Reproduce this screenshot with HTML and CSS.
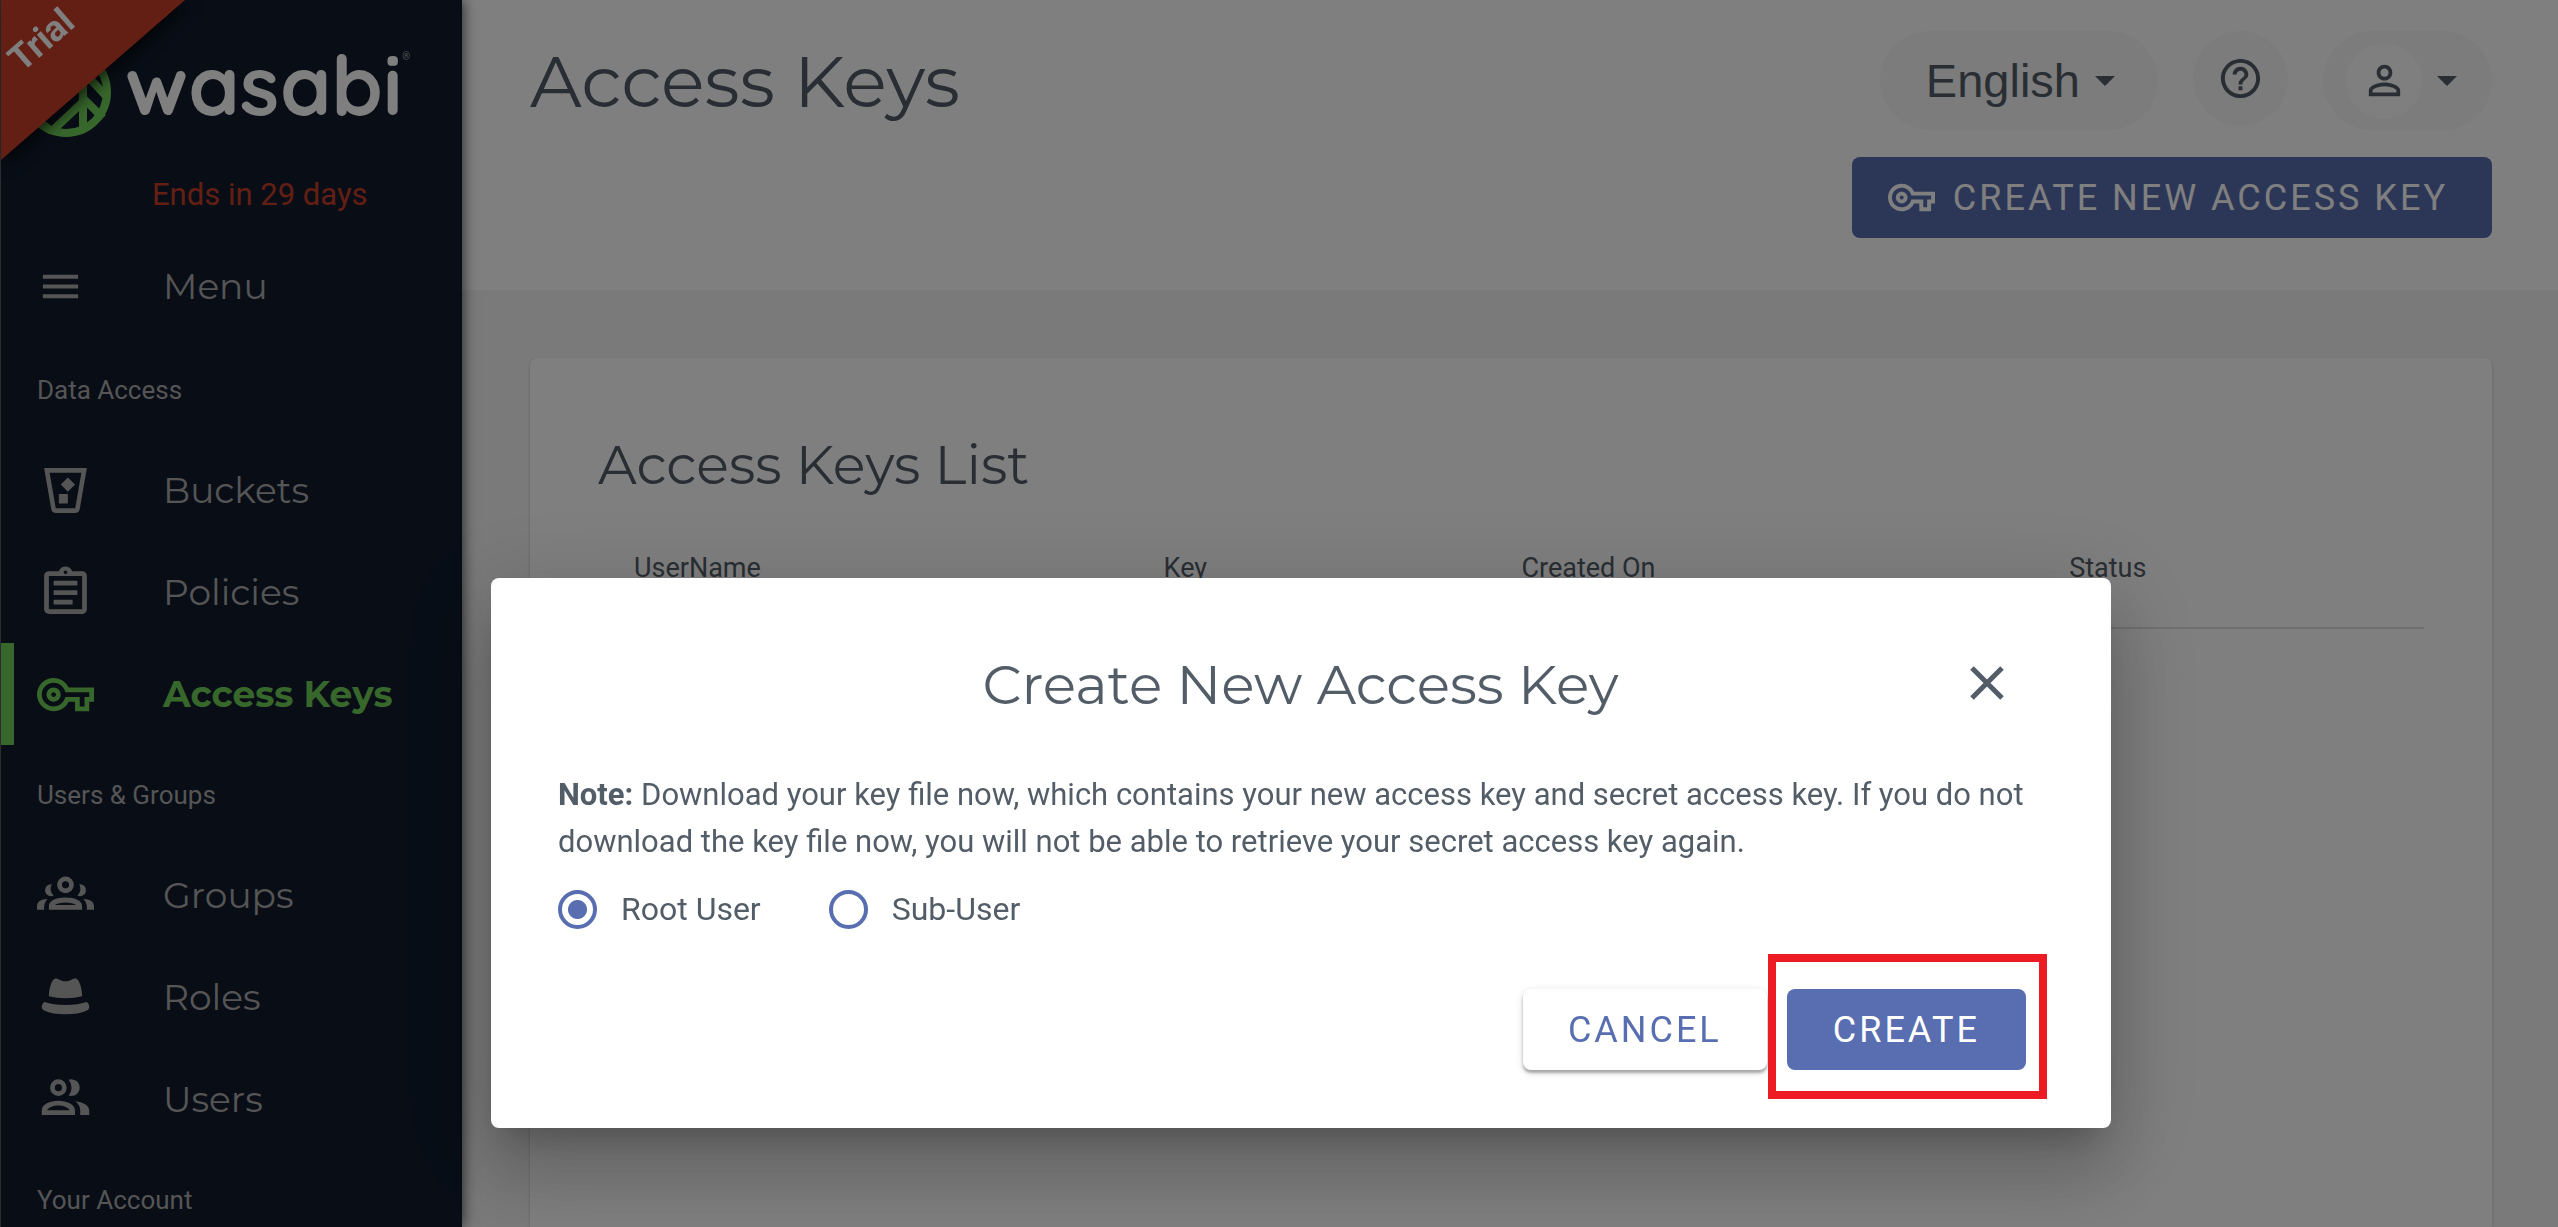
FILE: index.html
```html
<!DOCTYPE html>
<html lang="en">
	<head>
		<meta charset="utf-8" />
		<title>Wasabi - Access Keys</title>
		<meta name="viewport" content="width=device-width, initial-scale=1" />
		<link rel="stylesheet" href="styles.css">
	</head>
	<body>
		<!-- shared icons -->
		<svg class="sprite" aria-hidden="true">
			<symbol id="icon-key" viewBox="0 0 24 24">
				<path d="M22 19h-6v-4h-2.68c-1.14 2.42-3.6 4-6.32 4-3.86 0-7-3.14-7-7s3.14-7 7-7c2.72 0 5.17 1.58 6.32 4H24v6h-2v4zm-4-2h2v-4h2v-2H11.94l-.23-.67C11.01 8.34 9.11 7 7 7c-2.76 0-5 2.24-5 5s2.24 5 5 5c2.11 0 4.01-1.34 4.71-3.33l.23-.67H18v4zM7 15c-1.65 0-3-1.35-3-3s1.35-3 3-3 3 1.35 3 3-1.35 3-3 3zm0-4c-.55 0-1 .45-1 1s.45 1 1 1 1-.45 1-1-.45-1-1-1z"/>
			</symbol>
			<symbol id="icon-caret" viewBox="0 0 20 10">
				<path d="M0 0h20L10 10z"/>
			</symbol>
		</svg>

		<div class="app">
			<aside class="sidebar">
				<div class="brand">
					<svg class="brand-mark" viewBox="0 0 90 90">
						<circle cx="45" cy="45" r="41" fill="none" stroke="#70ce58" stroke-width="8"/>
						<path d="M62 8v74M31 84l34-32M60 49l22 22M60 22l26 28M31 84L14 72" fill="none" stroke="#70ce58" stroke-width="8"/>
					</svg>
					<span class="brand-name">wasabi</span><sup class="brand-reg">®</sup>
				</div>
				<div class="ribbon"><div class="ribbon-fill"><span>Trial</span></div></div>
				<p class="trial-note">Ends in 29 days</p>

				<nav>
					<button class="nav-item nav-menu" type="button">
						<svg class="nav-icon nav-icon-sm" viewBox="0 0 24 24"><path d="M3 18h18v-2H3v2zm0-5h18v-2H3v2zm0-7v2h18V6H3z"/></svg>
						Menu
					</button>

					<h2 class="nav-label">Data Access</h2>
					<a class="nav-item" href="#buckets">
						<svg class="nav-icon" viewBox="0 0 24 24"><path fill-rule="evenodd" d="M3 2.500h18L18 19.800a2 2 0 0 1-2 1.700H8a2 2 0 0 1-2-1.700zM5.300 4.500l2.600 15h8.200l2.600-15zM13 6.500l3 3-3 3-3-3zM9.200 13.500h3.800v4H9.200z"/></svg>
						Buckets
					</a>
					<a class="nav-item" href="#policies">
						<svg class="nav-icon" viewBox="0 0 24 24"><path d="M7 15h8v2H7zm0-4h10v2H7zm0-4h10v2H7z"/><path d="M19 3h-4.180C14.400 1.840 13.300 1 12 1c-1.300 0-2.400.84-2.820 2H5c-.14 0-.27.01-.4.040-.39.080-.74.280-1.010.550-.18.180-.33.400-.43.640-.1.230-.16.490-.16.770v14c0 .27.06.54.16.78s.25.45.43.640c.27.270.62.470 1.010.550.13.020.26.030.4.030h14c1.100 0 2-.9 2-2V5c0-1.100-.9-2-2-2zm-7-.25c.41 0 .75.340.75.750s-.34.750-.75.750-.75-.34-.75-.75.340-.75.750-.75zM19 19H5V5h14v14z"/></svg>
						Policies
					</a>
					<a class="nav-item active" href="#access-keys" aria-current="page">
						<svg class="nav-icon"><use href="#icon-key"/></svg>
						Access Keys
					</a>

					<h2 class="nav-label">Users &amp; Groups</h2>
					<a class="nav-item" href="#groups">
						<svg class="nav-icon" viewBox="0 0 24 24"><path d="M7 12a2.500 2.500 0 1 1-.8-4.700 4 4 0 0 0 .8 4.700zM17 12a2.500 2.500 0 1 0 .8-4.700 4 4 0 0 1-.8 4.700zM0 18v-1.500c0-1.700 1.600-3 4.500-3A5 5 0 0 0 3 17v1zm24 0v-1.500c0-1.700-1.600-3-4.500-3A5 5 0 0 1 21 17v1z"/><path fill-rule="evenodd" d="M12 4a3.500 3.500 0 1 1 0 7 3.500 3.500 0 0 1 0-7zm0 2a1.500 1.500 0 1 0 0 3 1.500 1.500 0 0 0 0-3zM5 18v-1.500C5 14.200 8 12.800 12 12.800s7 1.400 7 3.700V18zm2.500-2h9c-.9-.7-2.500-1.100-4.500-1.100s-3.600.4-4.500 1.100z"/></svg>
						Groups
					</a>
					<a class="nav-item" href="#roles">
						<svg class="nav-icon" viewBox="0 0 24 24"><path d="M5 11.500C5 8.500 6.200 4 7.800 4c1.400 0 2.400 1.200 4.200 1.200S14.800 4 16.200 4C17.800 4 19 8.500 19 11.500c-2 .5-4.500.8-7 .8s-5-.3-7-.8zM3.200 13.900c2.300.8 5.300 1.300 8.800 1.300s6.500-.5 8.800-1.300c.7.400 1.200 1.100 1.200 2 0 .7-.4 1.300-1 1.600-2.400 1.100-5.500 1.600-9 1.600s-6.600-.5-9-1.600c-.6-.3-1-.9-1-1.600 0-.9.5-1.600 1.200-2z"/></svg>
						Roles
					</a>
					<a class="nav-item" href="#users">
						<svg class="nav-icon" viewBox="0 0 24 24"><path d="M16.200 12.700c3 .4 5.800 1.700 5.800 3.900v1.900h-3.800v-1.900c0-1.600-.8-2.900-2-3.900zM13.300 3.700a3.500 3.500 0 1 1 0 6.600 5 5 0 0 0 0-6.600z"/><path fill-rule="evenodd" d="M9 3.500a3.500 3.500 0 1 1 0 7 3.500 3.500 0 0 1 0-7zm0 2a1.500 1.500 0 1 0 0 3 1.500 1.500 0 0 0 0-3zM2 18.500V16.500c0-2.500 3.500-4 7-4s7 1.500 7 4v2zm2.200-2h9.600c-.6-1.100-2.600-2-4.800-2s-4.200.9-4.800 2z"/></svg>
						Users
					</a>

					<h2 class="nav-label">Your Account</h2>
				</nav>
			</aside>

			<main class="main">
				<header class="page-header">
					<h1>Access Keys</h1>
					<div class="header-side">
						<div class="toolbar">
							<button class="pill" type="button">English <svg class="caret"><use href="#icon-caret"/></svg></button>
							<button class="pill pill-round" type="button" aria-label="Help">
								<svg class="help-icon" viewBox="0 0 24 24"><path d="M11 18h2v-2h-2v2zm1-16C6.480 2 2 6.480 2 12s4.480 10 10 10 10-4.480 10-10S17.520 2 12 2zm0 18c-4.410 0-8-3.590-8-8s3.590-8 8-8 8 3.590 8 8-3.590 8-8 8zm0-14c-2.210 0-4 1.790-4 4h2c0-1.100.9-2 2-2s2 .9 2 2c0 2-3 1.750-3 5h2c0-2.250 3-2.500 3-5 0-2.210-1.790-4-4-4z"/></svg>
							</button>
							<button class="pill pill-user" type="button" aria-label="Account">
								<span class="avatar"><svg class="help-icon" viewBox="0 0 24 24"><path d="M12 5.900c1.160 0 2.100.94 2.100 2.100s-.94 2.100-2.100 2.100S9.900 9.160 9.900 8s.94-2.100 2.100-2.100m0 9c2.970 0 6.100 1.460 6.100 2.100v1.100H5.900V17c0-.64 3.130-2.100 6.100-2.100M12 4C9.790 4 8 5.790 8 8s1.790 4 4 4 4-1.790 4-4-1.790-4-4-4zm0 9c-2.670 0-8 1.340-8 4v3h16v-3c0-2.660-5.330-4-8-4z"/></svg></span>
								<svg class="caret"><use href="#icon-caret"/></svg>
							</button>
						</div>
						<button class="btn btn-primary btn-icon" type="button"><svg><use href="#icon-key"/></svg>CREATE NEW ACCESS KEY</button>
					</div>
				</header>

				<section class="card">
					<h2>Access Keys List</h2>
					<table>
						<thead>
							<tr>
								<th class="col-user">UserName</th>
								<th class="col-key">Key</th>
								<th class="col-created">Created On</th>
								<th>Status</th>
							</tr>
						</thead>
					</table>
				</section>
			</main>
		</div>

		<div class="overlay">
			<form class="dialog" role="dialog" aria-labelledby="dialog-title">
				<div class="dialog-head">
					<h2 id="dialog-title">Create New Access Key</h2>
					<button class="close" type="button" aria-label="Close">
						<svg viewBox="0 0 34 34"><path d="M2 2l30 30M32 2L2 32"/></svg>
					</button>
				</div>
				<p><strong>Note:</strong> Download your key file now, which contains your new access key and secret access key. If you do not download the key file now, you will not be able to retrieve your secret access key again.</p>
				<div class="radios">
					<label><input type="radio" name="user-type" checked>Root User</label>
					<label><input type="radio" name="user-type">Sub-User</label>
				</div>
				<div class="actions">
					<button class="btn btn-plain" type="button">CANCEL</button>
					<button class="btn btn-primary highlight" type="submit">CREATE</button>
				</div>
			</form>
		</div>
	</body>
</html>
```
FILE: styles.css
```css
* {
	box-sizing: border-box;
}
body {
	margin: 0;
	height: 100vh;
	overflow: hidden;
	font-family: Roboto, sans-serif;
	color: #535d68;
	background: #f4f4f4;
}
button {
	font: inherit;
	color: inherit;
	border: none;
	background: none;
	padding: 0;
	cursor: pointer;
}
svg {
	fill: currentColor;
	flex: none;
}
.sprite {
	position: absolute;
	width: 0;
	height: 0;
}
h1, h2 {
	margin: 0;
	font-family: Montserrat, Inter, sans-serif;
	font-weight: 400;
}

.app {
	display: flex;
	height: 100vh;
}

/* sidebar */
.sidebar {
	position: relative;
	z-index: 1;
	flex: none;
	width: 462px;
	border-left: 1px solid #555c66;
	background: #101b2d;
	box-shadow: 2px 0 12px rgba(0, 0, 0, 0.6);
	color: #aaa;
}
.brand {
	display: flex;
	height: 171px;
	padding: 47px 0 0 20px;
}
.brand-mark {
	width: 90px;
	height: 90px;
}
.brand-name {
	margin-left: 14px;
	font: 700 82px/76px Quicksand, "Varela Round", Nunito, Lato, sans-serif;
	color: #fff;
}
.brand-reg {
	font-size: 10px;
	line-height: 20px;
}
.ribbon {
	position: absolute;
	top: 0;
	left: 0;
	filter: drop-shadow(4px 4px 8px rgba(0, 0, 0, 0.7));
}
.ribbon-fill {
	width: 184px;
	height: 160px;
	background: #c83e28;
	clip-path: polygon(0 0, 100% 0, 0 100%);
}
.ribbon span {
	position: absolute;
	top: 20px;
	left: 4px;
	font-size: 36px;
	line-height: 40px;
	font-weight: 700;
	color: #fff;
	transform: rotate(-41deg);
}
.trial-note {
	margin: 0;
	height: 64px;
	padding-left: 151px;
	font-size: 31px;
	line-height: 48px;
	color: #c83e28;
}
.nav-item {
	display: flex;
	align-items: center;
	gap: 69px;
	width: 100%;
	height: 102px;
	padding-left: 36px;
	font-family: Montserrat, Inter, sans-serif;
	font-size: 36px;
	font-weight: 400;
	text-decoration: none;
	color: #aaa;
}
.nav-menu {
	margin-bottom: 3px;
	gap: 79px;
}
.nav-item.active {
	padding-left: 23px;
	border-left: 13px solid #70ce58;
	color: #70ce58;
	font-weight: 700;
}
.nav-icon {
	width: 57px;
	height: 57px;
}
.nav-icon-sm {
	width: 47px;
	height: 47px;
}
.nav-label {
	height: 99px;
	padding-left: 36px;
	font-family: Roboto, sans-serif;
	font-size: 26px;
	line-height: 101px;
}

/* page */
.main {
	flex: 1;
	display: flex;
	flex-direction: column;
}
.page-header {
	display: flex;
	justify-content: space-between;
	height: 290px;
	padding: 31px 66px 0 68px;
	background: #fff;
}
.page-header h1 {
	font-size: 72px;
	line-height: 100px;
}
.header-side {
	display: flex;
	flex-direction: column;
	align-items: flex-end;
	gap: 27px;
}
.toolbar {
	display: flex;
	align-items: flex-start;
	gap: 35px;
}
.pill {
	display: flex;
	align-items: center;
	gap: 15px;
	height: 99px;
	padding: 0 43px 0 46px;
	border-radius: 50px;
	background: #f8f8f8;
	font-family: "Liberation Sans", sans-serif;
	font-size: 47px;
}
.pill-round {
	width: 95px;
	height: 95px;
	padding: 0;
	justify-content: center;
}
.pill-user {
	padding: 0 35px 0 23px;
}
.caret {
	width: 20px;
	height: 10px;
}
.avatar {
	display: flex;
	align-items: center;
	justify-content: center;
	width: 76px;
	height: 76px;
	border-radius: 50%;
	background: #fff;
}
.help-icon {
	width: 47px;
	height: 47px;
}
.btn {
	height: 81px;
	padding: 0 46px;
	border-radius: 8px;
	font-size: 36px;
	letter-spacing: 3px;
}
.btn-primary {
	background: #586eb1;
	color: #fff;
}
.btn-icon {
	display: flex;
	align-items: center;
	gap: 18px;
	padding: 0 44px 0 36px;
}
.btn-icon svg {
	width: 47px;
	height: 47px;
}
.card {
	flex: 1;
	margin: 68px 66px 0 68px;
	padding: 68px;
	border-radius: 8px 8px 0 0;
	background: #fff;
	box-shadow: 0 1px 3px rgba(0, 0, 0, 0.2);
}
.card h2 {
	font-size: 54px;
	line-height: 78px;
}
table {
	width: 100%;
	border-collapse: collapse;
	table-layout: fixed;
}
th {
	height: 124px;
	padding: 4px 0 0 36px;
	border-bottom: 2px solid #e0e0e0;
	font-size: 27px;
	font-weight: 400;
	text-align: left;
}
.col-user {
	width: 29%;
}
.col-key {
	width: 19.6%;
}
.col-created {
	width: 30%;
}

/* dialog */
.overlay {
	position: fixed;
	inset: 0;
	z-index: 10;
	display: flex;
	align-items: flex-end;
	justify-content: center;
	padding: 0 0 99px 44px;
	background: rgba(0, 0, 0, 0.5);
}
.dialog {
	width: 1620px;
	padding: 68px 68px 58px 67px;
	border-radius: 8px;
	background: #fff;
	box-shadow: 0 22px 30px -14px rgba(0, 0, 0, 0.2), 0 48px 76px 6px rgba(0, 0, 0, 0.14), 0 18px 92px 16px rgba(0, 0, 0, 0.12);
}
.dialog-head {
	position: relative;
	display: flex;
	justify-content: center;
}
.dialog-head h2 {
	font-size: 55px;
	line-height: 78px;
}
.close {
	position: absolute;
	top: 20px;
	right: 39px;
	display: flex;
}
.close svg {
	width: 34px;
	height: 34px;
	stroke: currentColor;
	stroke-width: 5;
}
.dialog p {
	margin: 47px 0 17px;
	font-size: 31px;
	line-height: 47px;
}
.radios {
	display: flex;
	gap: 68px;
}
.radios label {
	display: flex;
	align-items: center;
	gap: 24px;
	font-size: 32px;
	line-height: 54px;
}
.radios input {
	appearance: none;
	width: 39px;
	height: 39px;
	margin: 0;
	border: 4px solid #586eb1;
	border-radius: 50%;
}
.radios input:checked {
	background: radial-gradient(circle, #586eb1 9px, #fff 10px);
}
.actions {
	display: flex;
	justify-content: flex-end;
	gap: 20px;
	margin: 53px 17px 0 0;
}
.btn-plain {
	padding: 0 45px;
	background: #fff;
	color: #586eb1;
	box-shadow: 0 3px 3px rgba(0, 0, 0, 0.3), 0 2px 10px rgba(0, 0, 0, 0.12);
}
.highlight {
	position: relative;
}
/* red frame round the create button */
.highlight::after {
	content: "";
	position: absolute;
	inset: -35px -21px -29px -19px;
	border: 8px solid #ed1c24;
}
```
